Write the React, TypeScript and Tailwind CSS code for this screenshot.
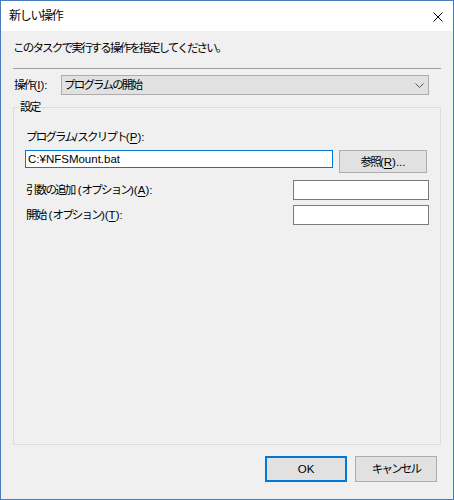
import React from 'react';

const font = { fontFamily: '"Liberation Sans", "Noto Sans CJK JP", sans-serif' };

// latin runs keep normal spacing; the CJK around them is tightened
const L = ({ children }: { children: React.ReactNode }) => (
  <span className="tracking-[0px]">{children}</span>
);

const Key = ({ children }: { children: React.ReactNode }) => (
  <span className="underline underline-offset-[2px] decoration-[1px]">{children}</span>
);

const TextBox = ({ value, className }: { value?: string; className: string }) => (
  <div className={`bg-white flex items-center px-[2px] text-[11.5px] tracking-[0px] ${className}`}>{value}</div>
);

export default function App() {
  return (
    <div
      className="w-[454px] h-[500px] border border-[#4a7cbd] flex flex-col bg-[#f0f0f0] text-black text-[11.5px] tracking-[-1.8px] leading-[16px]"
      style={font}
    >
      {/* title bar */}
      <div className="h-[30px] bg-white flex items-center justify-between pl-[8px] pr-[10px] shrink-0">
        <span className="text-[12px] tracking-[-1.3px]">新しい操作</span>
        <svg width="10" height="10" viewBox="0 0 10 10" className="mt-[1px]">
          <path d="M0.5 0.5 L9.5 9.5 M9.5 0.5 L0.5 9.5" stroke="#000" strokeWidth="1" />
        </svg>
      </div>

      <div className="flex-1 flex flex-col px-[12px]">
        <div className="mt-[9px] h-[16px]">このタスクで実行する操作を指定してください。</div>
        <div className="mt-[12px] h-[1px] bg-[#a0a0a0]" />

        {/* action row */}
        <div className="mt-[6px] flex items-center h-[20px]">
          <div className="w-[48px] pl-[1px]">
            操作<L>(<Key>I</Key>):</L>
          </div>
          <div className="w-[368px] h-[20px] bg-[#e1e1e1] border border-[#adadad] flex items-center justify-between pl-[2px] pr-[4px]">
            <span>プログラムの開始</span>
            <svg width="9" height="5" viewBox="0 0 9 5">
              <path d="M0.5 0.5 L4.5 4.5 L8.5 0.5" stroke="#555" strokeWidth="1" fill="none" />
            </svg>
          </div>
        </div>

        {/* settings group */}
        <div className="relative mt-[12px] h-[338px] border border-[#dcdcdc] px-[11px] flex flex-col">
          <span className="absolute left-[5px] top-[-9px] px-[1px] bg-[#f0f0f0]">設定</span>

          <div className="mt-[21px] h-[16px] pl-[1px]">
            プログラム<L>/</L>スクリプト<L>(<Key>P</Key>):</L>
          </div>
          <div className="mt-[5px] flex items-start gap-[6px]">
            <TextBox value="C:¥NFSMount.bat" className="w-[308px] h-[18px] border border-[#0078d7]" />
            <button className="w-[88px] h-[23px] bg-[#e1e1e1] border border-[#adadad] flex items-center justify-center">
              参照<L>(<Key>R</Key>)...</L>
            </button>
          </div>

          <div className="mt-[7px] flex items-center justify-between h-[20px]">
            <span className="pl-[1px]">
              引数の追加<L> (</L>オプション<L>)(<Key>A</Key>):</L>
            </span>
            <TextBox className="w-[136px] h-[20px] border border-[#7a7a7a]" />
          </div>
          <div className="mt-[5px] flex items-center justify-between h-[20px]">
            <span className="pl-[1px]">
              開始<L> (</L>オプション<L>)(<Key>T</Key>):</L>
            </span>
            <TextBox className="w-[136px] h-[20px] border border-[#7a7a7a]" />
          </div>
        </div>

        {/* buttons */}
        <div className="mt-[11px] flex justify-end gap-[8px] mr-[4px]">
          <button className="w-[82px] h-[26px] bg-[#e1e1e1] border-2 border-[#0078d7] flex items-center justify-center tracking-[0px]">
            OK
          </button>
          <button className="w-[82px] h-[26px] bg-[#e1e1e1] border border-[#adadad] flex items-center justify-center">
            キャンセル
          </button>
        </div>
      </div>
    </div>
  );
}
